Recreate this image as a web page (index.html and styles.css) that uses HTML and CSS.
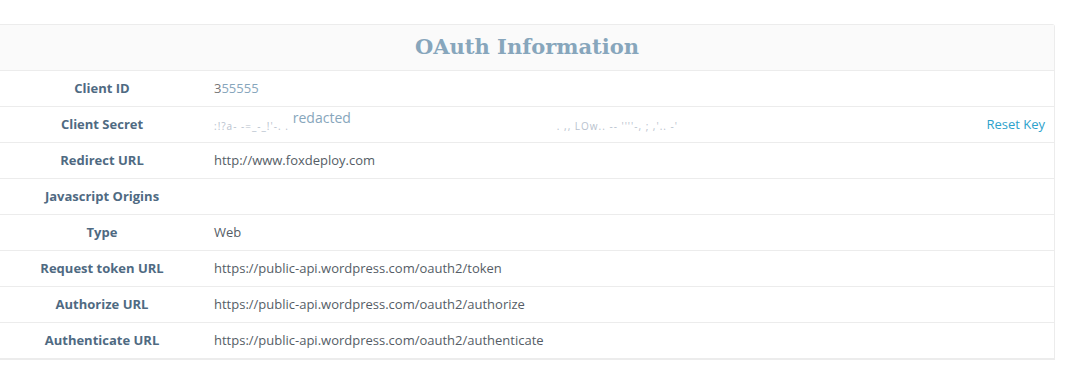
FILE: index.html
```html
<!DOCTYPE html>
<html>
<head>
<meta charset="utf-8">
<link rel="stylesheet" href="styles.css">
</head>
<body>
<div class="panel">
  <div class="panel-head"><h2 class="title">OAuth Information</h2></div>
  <div class="row"><div class="label">Client ID</div><div class="value"><span class="dark">3</span><span class="faint">55555</span></div></div>
  <div class="row"><div class="label">Client Secret</div><div class="value secret"><span class="blur">:!?a- -=_-_!'-. .</span><span class="redacted">redacted</span><span class="gap"></span><span class="blur">. ,, LOw.. -- ''''-, ; ,'.. -'</span></div><a class="reset">Reset Key</a></div>
  <div class="row"><div class="label">Redirect URL</div><div class="value">http://www.foxdeploy.com</div></div>
  <div class="row"><div class="label">Javascript Origins</div><div class="value"></div></div>
  <div class="row"><div class="label">Type</div><div class="value">Web</div></div>
  <div class="row"><div class="label">Request token URL</div><div class="value">https://public-api.wordpress.com/oauth2/token</div></div>
  <div class="row"><div class="label">Authorize URL</div><div class="value">https://public-api.wordpress.com/oauth2/authorize</div></div>
  <div class="row"><div class="label">Authenticate URL</div><div class="value">https://public-api.wordpress.com/oauth2/authenticate</div></div>
</div>
</body>
</html>
```
FILE: styles.css
```css
html, body {
  margin: 0;
  padding: 0;
  background: #fff;
}
body {
  padding-top: 24px;
  font-family: "Open Sans", "Noto Sans", sans-serif;
  font-size: 13px;
}
.panel {
  width: 1054px;
  border: 1px solid #ececec;
  border-left: none;
  border-top-right-radius: 3px;
}
.panel-head {
  height: 43px;
  padding-bottom: 2px;
  background: #fafafa;
  border-bottom: 1px solid #ececec;
  display: flex;
  align-items: center;
  justify-content: center;
}
.title {
  margin: 0;
  font-family: "DejaVu Serif", "Liberation Serif", serif;
  font-weight: bold;
  font-size: 21px;
  color: #87a6bc;
}
.row {
  height: 33px;
  padding-bottom: 2px;
  display: flex;
  align-items: center;
  border-bottom: 1px solid #ececec;
}
.label {
  width: 204px;
  text-align: center;
  font-weight: bold;
  color: #4f6a82;
}
.value {
  flex: 1;
  padding-left: 10px;
  color: #555d66;
  white-space: nowrap;
}
.dark { color: #777; }
.faint { color: #87a6bc; }
.secret {
  display: flex;
  align-items: center;
}
.blur {
  color: #b8c2ce;
  font-size: 10px;
  letter-spacing: 1px;
  position: relative;
  top: 2px;
}
.redacted {
  margin-left: 4px;
  color: #87a6bc;
  font-size: 14px;
  position: relative;
  top: -6px;
}
.gap { width: 206px; }
.reset {
  color: #2ea2cc;
  padding-right: 9px;
  cursor: pointer;
}
```
